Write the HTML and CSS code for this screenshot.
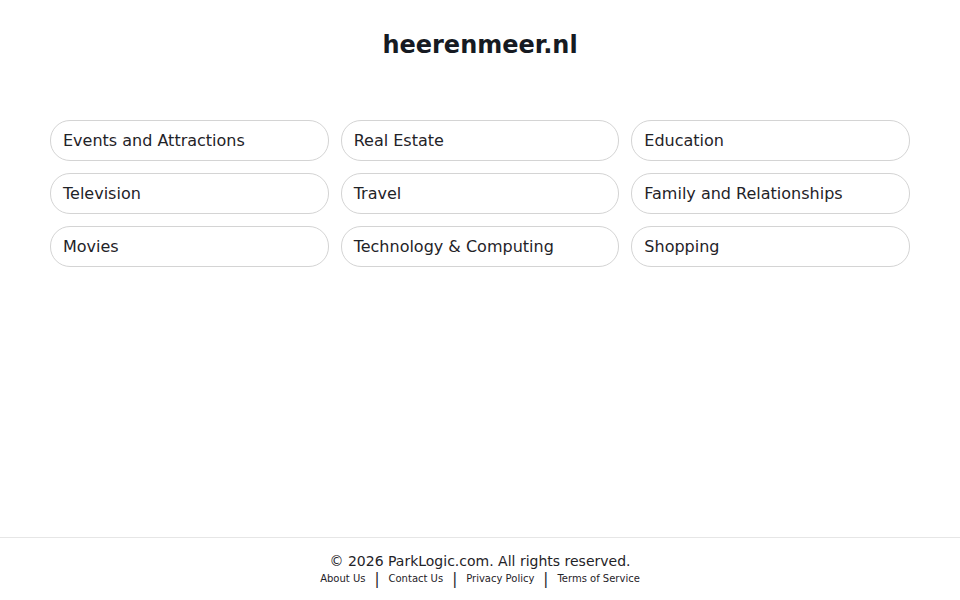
FILE: index.html
```html
<!DOCTYPE html>
<html lang="en">
<head>
<meta charset="utf-8">
<title>heerenmeer.nl</title>
<link rel="stylesheet" href="styles.css">
</head>
<body>
<main class="main">
  <h1 class="title">heerenmeer.nl</h1>
  <div class="grid">
    <a class="pill" href="#">Events and Attractions</a>
    <a class="pill" href="#">Real Estate</a>
    <a class="pill" href="#">Education</a>
    <a class="pill" href="#">Television</a>
    <a class="pill" href="#">Travel</a>
    <a class="pill" href="#">Family and Relationships</a>
    <a class="pill" href="#">Movies</a>
    <a class="pill" href="#">Technology &amp; Computing</a>
    <a class="pill" href="#">Shopping</a>
  </div>
</main>
<footer class="footer">
  <div class="copy">© 2026 ParkLogic.com. All rights reserved.</div>
  <div class="links">
    <a href="#">About Us</a><span class="sep">|</span><a href="#">Contact Us</a><span class="sep">|</span><a href="#">Privacy Policy</a><span class="sep">|</span><a href="#">Terms of Service</a>
  </div>
</footer>
</body>
</html>
```
FILE: styles.css
```css
html, body {
  margin: 0;
  padding: 0;
  background: #ffffff;
}
body {
  font-family: "DejaVu Sans", sans-serif;
  color: #1f2328;
  min-height: 100vh;
  display: flex;
  flex-direction: column;
}
.main {
  flex: 1;
  padding: 0 50px;
}
.title {
  margin: 30px 0 0;
  text-align: center;
  font-size: 24px;
  line-height: 30px;
  font-weight: bold;
  color: #161a22;
}
.grid {
  margin-top: 60px;
  display: grid;
  grid-template-columns: repeat(3, 1fr);
  column-gap: 12px;
  row-gap: 12px;
}
.pill {
  display: flex;
  align-items: center;
  height: 39px;
  padding: 0 12px;
  border: 1px solid #d4d4d4;
  border-radius: 20px;
  font-size: 16px;
  color: #1f2328;
  text-decoration: none;
}
.footer {
  border-top: 1px solid #e6e6e6;
  padding: 14px 0 12px;
  text-align: center;
}
.copy {
  font-size: 14px;
  line-height: 18px;
  color: #1f2328;
}
.links {
  font-size: 10px;
  line-height: 18px;
  display: flex;
  justify-content: center;
  align-items: center;
}
.links a {
  color: #1f2328;
  text-decoration: none;
}
.sep {
  font-size: 15px;
  margin: 0 9px;
  color: #1f2328;
}
```
